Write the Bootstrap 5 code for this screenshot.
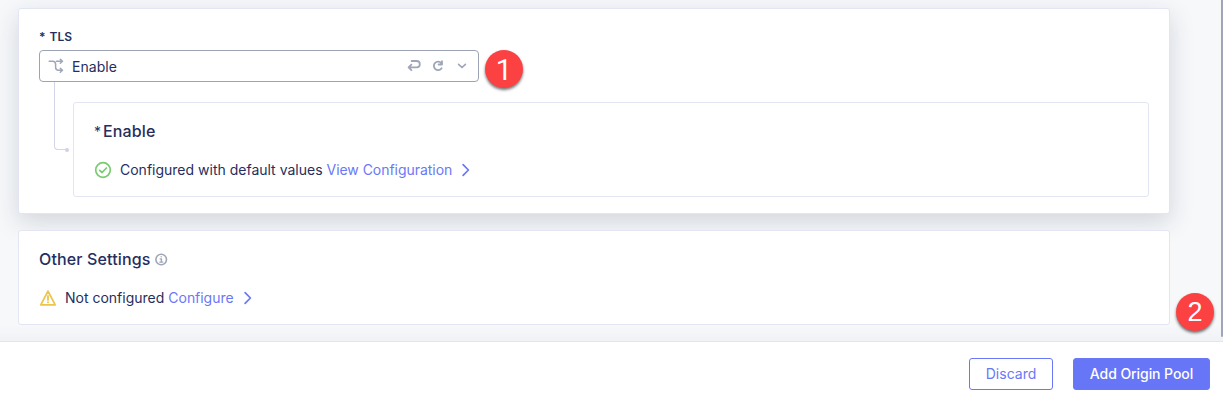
<!DOCTYPE html>
<html lang="en">
<head>
<meta charset="utf-8">
<meta name="viewport" content="width=device-width, initial-scale=1">
<title>Origin Pool</title>
<link href="https://cdn.jsdelivr.net/npm/bootstrap@5.3.0/dist/css/bootstrap.min.css" rel="stylesheet">
<style>
  :root { --ink: #262e60; --link: #6a78f8; --line: #e3e6f2; }
  body { font-family: Inter, sans-serif; font-size: 14px; line-height: 20px; color: var(--ink); height: 404px; background: #fff; }
  svg { display: block; flex: none; fill: none; stroke-linecap: round; stroke-linejoin: round; }
  .workspace { height: 341px; background: linear-gradient(#f6f8fa 0 325px, #f1f2f6); padding: 8px 53px 0 18px; }
  .panel { background: #fff; border: 1px solid var(--line); border-radius: 3px; padding: 0 20px; }
  .panel-tls { height: 206px; box-shadow: 0 8px 24px rgba(40,45,70,.17); padding-top: 20px; }
  .panel-other { height: 95px; margin-top: 16px; padding-top: 17px; }
  .field-label { font-size: 12px; line-height: 16px; font-weight: 600; margin-bottom: 5px; }
  .choice-row { height: 32px; }
  .choice { width: 440px; height: 32px; border: 1px solid #9ca3b5; border-radius: 4px; padding: 0 9px 0 8px; }
  .choice-value { padding-top: 2px; letter-spacing: .05px; }
  .choice-tools { gap: 10px; }
  .connector { width: 11px; height: 68px; margin-left: 15px; border: solid #d3d5e8; border-width: 0 0 1px 1px; border-bottom-left-radius: 4px; }
  .dot { width: 4px; height: 4px; border-radius: 50%; background: #cfd2e5; margin: 66px 4px 0 0; }
  .sub-panel { height: 95px; margin-top: 20px; border: 1px solid var(--line); border-radius: 3px; padding: 17px 20px 0; }
  .heading { font-size: 16px; line-height: 22px; font-weight: 500; letter-spacing: .14px; }
  .star { font-size: 14px; font-weight: 400; display: inline-block; width: 9px; line-height: 16px; }
  .status { margin-top: 18px; }
  .status-text { margin-left: 8px; }
  .action { color: var(--link); text-decoration: none; margin-left: 4px; letter-spacing: -.04px; }
  .chevron { margin-left: 7px; }
  .callout { flex: none; width: 38px; height: 38px; background: #fc4143; color: #fff; border-radius: 50%; box-shadow: 0 2px 3px rgba(0,0,0,.55); font: 27px/39px "Liberation Sans", sans-serif; text-align: center; }
  .callout-one { margin: 6px 0 0 6px; font-family: Roboto, sans-serif; font-size: 29px; line-height: 40px; }
  .callout-two { right: 9px; top: 293px; }
  .scroll-thumb { right: 0; top: 0; width: 2px; height: 337px; background: #a0a6b8; border-radius: 0 0 2px 2px; }
  .footer-bar { height: 63px; border-top: 1px solid #e2e5ec; padding: 16px 13px 0 0; gap: 20px; }
  .footer-bar .btn { height: 32px; padding: 0; border-radius: 3px; font-size: 14px; line-height: 30px; border: 1px solid var(--link); }
  .footer-bar .btn-discard { width: 84px; color: var(--link); background: #fff; }
  .footer-bar .btn-add { width: 137px; color: #fff; background: #6775f7; font-weight: 500; letter-spacing: -.07px; }
</style>
</head>
<body class="position-relative overflow-hidden">
<main class="workspace">
  <section class="panel panel-tls">
    <div class="field-label d-flex"><span class="me-1">*</span><span>TLS</span></div>
    <div class="choice-row d-flex align-items-center">
      <div class="choice d-flex align-items-center">
        <svg width="16" height="16" viewBox="0 0 16 16" stroke="#a0a6b8" stroke-width="1.5"><path d="M1.2 3.3h3.4q3 0 3 3v2.9q0 3 3 3h3.7M8.5 3.3h6M12.3 1.3l2.2 2-2.2 2M12.3 10.2l2.2 2-2.2 2"/></svg>
        <span class="choice-value ms-2">Enable</span>
        <div class="choice-tools d-flex ms-auto">
          <svg width="14" height="14" viewBox="0 0 14 14" stroke="#a0a6b8" stroke-width="1.8"><path d="M4.6 2h5a2.9 2.9 0 0 1 0 6.4H1.7M4.4 5.6L1.6 8.4l2.8 2.8"/></svg>
          <svg width="14" height="14" viewBox="0 0 14 14" stroke="#a0a6b8" stroke-width="1.8"><path d="M10.3 4.2A4.2 4.2 0 1 0 10.6 9.2M11 2.2v3.3H7.6"/></svg>
          <svg width="14" height="14" viewBox="0 0 14 14" stroke="#a0a6b8" stroke-width="1.7"><path d="M3.6 5.3L7 8.5l3.4-3.2"/></svg>
        </div>
      </div>
      <div class="callout callout-one">1</div>
    </div>
    <div class="d-flex">
      <div class="connector"></div>
      <div class="dot"></div>
      <div class="sub-panel flex-grow-1">
        <div class="heading"><span class="star">*</span>Enable</div>
        <div class="status d-flex align-items-center">
          <svg width="18" height="18" viewBox="0 0 18 18" stroke="#79cb70" stroke-width="1.7"><circle cx="9" cy="9" r="7.3"/><path d="M5.7 9.3l2.4 2.2 4.3-4.5"/></svg>
          <span class="status-text">Configured with default values</span>
          <a class="action" href="#">View Configuration</a>
          <svg class="chevron" width="14" height="14" viewBox="0 0 14 14" stroke="#6a78f8" stroke-width="1.7"><path d="M4.1 1.6L9.4 7l-5.3 5.4"/></svg>
        </div>
      </div>
    </div>
  </section>
  <section class="panel panel-other">
    <div class="heading d-flex align-items-center">Other Settings
      <svg class="ms-1" width="13" height="13" viewBox="0 0 13 13" stroke="#a0a6b8" stroke-width="1.6"><circle cx="6.2" cy="6.5" r="5.3"/><path stroke-width="1.4" d="M5.2 5.9h1.2v3M4.8 9.1h3M6.2 3.7v.1"/></svg>
    </div>
    <div class="status d-flex align-items-center">
      <svg width="18" height="18" viewBox="0 0 18 18" stroke="#edc54b" stroke-width="1.8"><path d="M9 2.2l7.2 13.6H1.8zM9 7v4M9 13.2v.2"/></svg>
      <span class="status-text">Not configured</span>
      <a class="action" href="#">Configure</a>
      <svg class="chevron" width="14" height="14" viewBox="0 0 14 14" stroke="#6a78f8" stroke-width="1.7"><path d="M4.1 1.6L9.4 7l-5.3 5.4"/></svg>
    </div>
  </section>
</main>
<footer class="footer-bar d-flex justify-content-end bg-white">
  <button class="btn btn-discard" type="button">Discard</button>
  <button class="btn btn-add" type="button">Add Origin Pool</button>
</footer>
<div class="scroll-thumb position-absolute"></div>
<div class="callout callout-two position-absolute">2</div>
<script src="https://cdn.jsdelivr.net/npm/bootstrap@5.3.0/dist/js/bootstrap.bundle.min.js"></script>
</body>
</html>
